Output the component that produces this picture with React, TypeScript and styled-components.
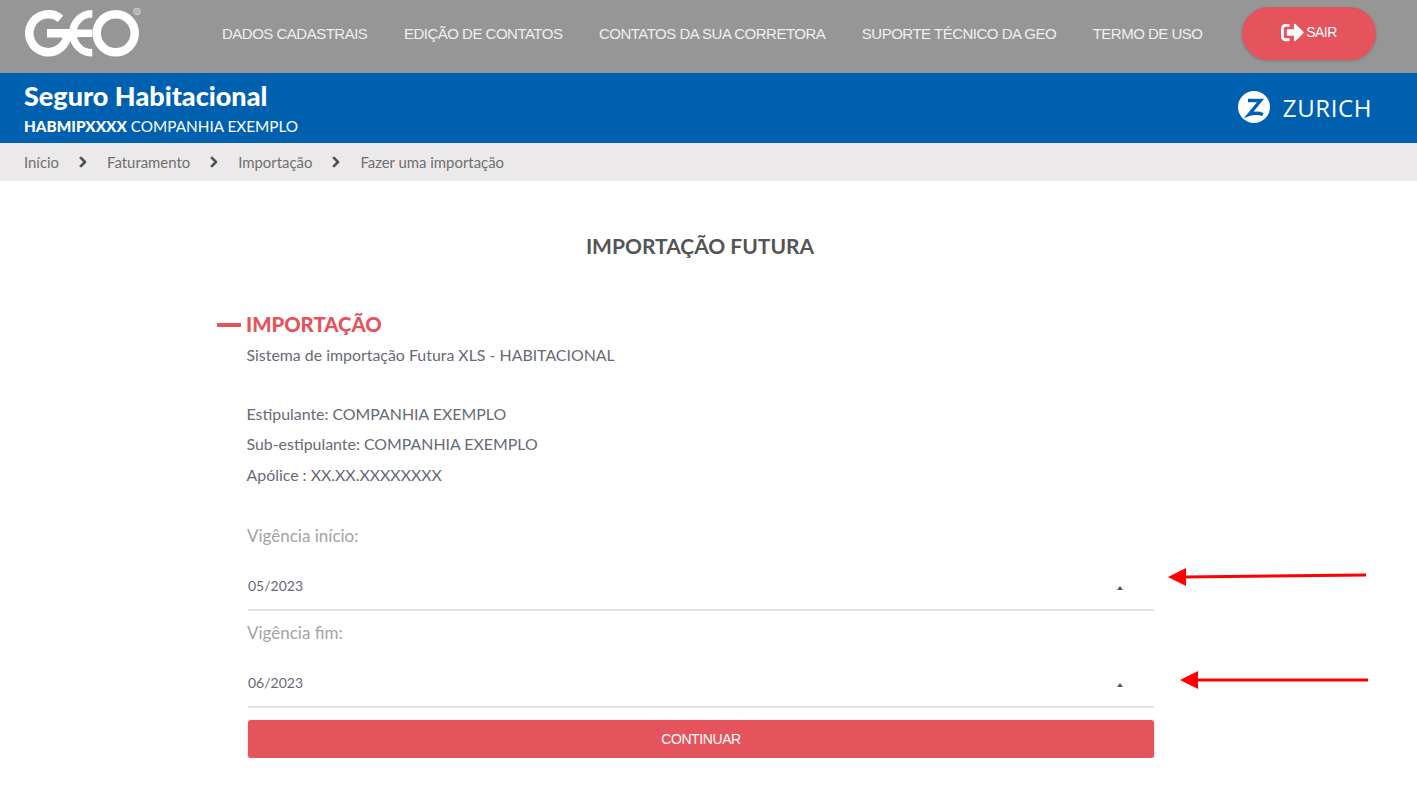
import React from 'react';
import styled, { createGlobalStyle } from 'styled-components';
import { FaSignOutAlt, FaChevronRight } from 'react-icons/fa';

const GlobalStyle = createGlobalStyle`
  html, body {
    margin: 0;
    padding: 0;
    background: #fff;
    overflow: hidden;
  }
  body {
    font-family: "Lato", "Liberation Sans", sans-serif;
  }
`;

const navItems = [
  'DADOS CADASTRAIS',
  'EDIÇÃO DE CONTATOS',
  'CONTATOS DA SUA CORRETORA',
  'SUPORTE TÉCNICO DA GEO',
  'TERMO DE USO',
];

const crumbs = ['Início', 'Faturamento', 'Importação', 'Fazer uma importação'];

const GeoLogo = () => (
  <LogoSvg viewBox="0 -3 118 52" role="img" aria-label="GEO">
    <g fill="none" stroke="#fff">
      <path d="M35.5 8.7 A19 19 0 1 0 42.3 23.3 H22" strokeWidth="8.5" />
      <path d="M67.3 3.8 A19.5 19.5 0 0 0 67.3 42.8" strokeWidth="7.5" />
      <line x1="47.8" y1="23.3" x2="67.3" y2="23.3" strokeWidth="7.5" />
      <circle cx="90.7" cy="23.3" r="19" strokeWidth="8.5" />
    </g>
    <circle cx="112" cy="1.5" r="3.4" fill="#b5b5b5" stroke="#c9c9c9" strokeWidth="1" />
  </LogoSvg>
);

const ZurichMark = () => (
  <svg width="32" height="32" viewBox="0 0 32 32">
    <circle cx="16" cy="16" r="16" fill="#fff" />
    <path d="M10 9.5 H22.5 L11 23.5 Q18 21 25 23.5" fill="none" stroke="#0060b0" strokeWidth="3.4" />
  </svg>
);

const RedArrow = ({ width, drop }: { width: number; drop: number }) => (
  <svg width={width} height="20" viewBox={`0 0 ${width} 20`}>
    <polygon points="0,10 18,1 18,19" fill="#f00" />
    <line x1="16" y1="10" x2={width} y2={10 - drop} stroke="#f00" strokeWidth="3" />
  </svg>
);

type FieldProps = {
  label: string;
  value: string;
  arrowTop: number;
  arrowLeft: number;
  arrowWidth: number;
  arrowDrop: number;
};

const SelectField = ({ label, value, arrowTop, arrowLeft, arrowWidth, arrowDrop }: FieldProps) => (
  <Field>
    <FieldLabel>{label}</FieldLabel>
    <SelectBox>
      <span>{value}</span>
      <Caret />
      <ArrowNote $top={arrowTop} $left={arrowLeft}>
        <RedArrow width={arrowWidth} drop={arrowDrop} />
      </ArrowNote>
    </SelectBox>
  </Field>
);

export default function App() {
  return (
    <>
      <GlobalStyle />
      <TopBar>
        <GeoLogo />
        <Nav>
          {navItems.map(item => (
            <NavLink key={item}>{item}</NavLink>
          ))}
        </Nav>
        <LogoutButton>
          <FaSignOutAlt size={23} />
          SAIR
        </LogoutButton>
      </TopBar>

      <ProductBar>
        <div>
          <ProductTitle>Seguro Habitacional</ProductTitle>
          <ProductSub>
            <strong>HABMIPXXXX</strong> COMPANHIA EXEMPLO
          </ProductSub>
        </div>
        <Zurich>
          <ZurichMark />
          <ZurichName>ZURICH</ZurichName>
        </Zurich>
      </ProductBar>

      <Breadcrumb>
        {crumbs.map((c, i) => (
          <React.Fragment key={c}>
            {i > 0 && (
              <CrumbSep>
                <FaChevronRight size={12} />
              </CrumbSep>
            )}
            <span>{c}</span>
          </React.Fragment>
        ))}
      </Breadcrumb>

      <Main>
        <PageTitle>IMPORTAÇÃO FUTURA</PageTitle>
        <SectionTitle>IMPORTAÇÃO</SectionTitle>
        <Intro>Sistema de importação Futura XLS - HABITACIONAL</Intro>
        <InfoBlock>
          <BodyLine>Estipulante: COMPANHIA EXEMPLO</BodyLine>
          <BodyLine>Sub-estipulante: COMPANHIA EXEMPLO</BodyLine>
          <BodyLine>Apólice : XX.XX.XXXXXXXX</BodyLine>
        </InfoBlock>
        <Form>
          <SelectField
            label="Vigência início:"
            value="05/2023"
            arrowTop={19}
            arrowLeft={14}
            arrowWidth={198}
            arrowDrop={2}
          />
          <SelectField
            label="Vigência fim:"
            value="06/2023"
            arrowTop={25}
            arrowLeft={26}
            arrowWidth={188}
            arrowDrop={0}
          />
          <ContinueButton>CONTINUAR</ContinueButton>
        </Form>
      </Main>
    </>
  );
}

const TopBar = styled.header`
  height: 73px;
  background: #969696;
  display: flex;
  align-items: center;
  padding: 0 41px 0 25px;
  box-sizing: border-box;
`;

const LogoSvg = styled.svg`
  width: 118px;
  height: 52px;
  margin-top: -7px;
  flex: none;
`;

const Nav = styled.nav`
  display: flex;
  gap: 36.5px;
  margin-left: 79px;
  margin-top: -6px;
  flex: 1;
`;

const NavLink = styled.a`
  font-family: "Liberation Sans", Arial, sans-serif;
  font-size: 15px;
  letter-spacing: -0.5px;
  color: #efefef;
  white-space: nowrap;
`;

const LogoutButton = styled.button`
  width: 134px;
  height: 53px;
  margin-top: -7px;
  padding: 0 0 2px;
  border: none;
  border-radius: 27px;
  background: #e5545c;
  color: #fff;
  font-family: "Liberation Sans", Arial, sans-serif;
  font-size: 14px;
  letter-spacing: -0.5px;
  display: flex;
  align-items: center;
  justify-content: center;
  gap: 2px;
  box-shadow: 0 1px 3px rgba(0, 0, 0, 0.2);
`;

const ProductBar = styled.div`
  height: 70px;
  background: #0060b0;
  color: #fff;
  display: flex;
  align-items: center;
  justify-content: space-between;
  padding: 0 45px 0 24px;
  box-sizing: border-box;
`;

const ProductTitle = styled.div`
  font-size: 27px;
  font-weight: 900;
  line-height: 30px;
`;

const ProductSub = styled.div`
  font-size: 15.3px;
  font-weight: 400;
  line-height: 18px;
  margin-top: 6px;
  white-space: nowrap;

  strong {
    font-weight: 900;
  }
`;

const Zurich = styled.div`
  display: flex;
  align-items: center;
  gap: 13px;
  margin-top: -2px;
`;

const ZurichName = styled.span`
  font-family: "Open Sans", sans-serif;
  font-size: 24px;
  letter-spacing: 0.6px;
`;

const Breadcrumb = styled.div`
  height: 38px;
  background: #ebe9e9;
  color: #6f6f6f;
  display: flex;
  align-items: center;
  padding-left: 24px;
  font-size: 14.9px;
`;

const CrumbSep = styled.span`
  color: #4a4a4a;
  width: 48px;
  display: flex;
  justify-content: center;

  svg {
    stroke: currentColor;
    stroke-width: 40px;
  }
`;

const Main = styled.main`
  width: 906px;
  margin-left: 248px;
`;

const PageTitle = styled.h1`
  margin: 52px 0 0;
  padding-right: 2px;
  font-size: 21px;
  line-height: 26px;
  font-weight: 700;
  color: #555;
  text-align: center;
`;

const SectionTitle = styled.h2`
  position: relative;
  margin: 52px 0 0 -2px;
  font-size: 20.3px;
  line-height: 26px;
  font-weight: 900;
  color: #e5545c;

  &::before {
    content: "";
    position: absolute;
    left: -29px;
    top: 12px;
    width: 24px;
    height: 4px;
    background: #e5545c;
  }
`;

const BodyLine = styled.p`
  margin: 0 0 0 -1.5px;
  font-size: 15.9px;
  line-height: 30.5px;
  color: #666a75;
`;

const Intro = styled(BodyLine)`
  margin-top: 3px;
`;

const InfoBlock = styled.div`
  margin-top: 28px;
`;

const Form = styled.div`
  margin-top: 34px;
`;

const Field = styled.div`
  margin-bottom: 9.5px;
`;

const FieldLabel = styled.label`
  display: block;
  margin-left: -1px;
  font-size: 17px;
  line-height: 24px;
  color: #a3a3a3;
`;

const SelectBox = styled.div`
  position: relative;
  height: 63px;
  border-bottom: 2px solid #e2e2e2;
  box-sizing: border-box;
  display: flex;
  align-items: flex-end;
  justify-content: space-between;
  padding: 0 31px 14px 0;
  font-size: 14px;
  line-height: 18px;
  color: #666a75;
`;

const Caret = styled.i`
  width: 0;
  height: 0;
  border-left: 3.5px solid transparent;
  border-right: 3.5px solid transparent;
  border-bottom: 4px solid #556;
  margin-bottom: 5px;
`;

const ArrowNote = styled.span<{ $top: number; $left: number }>`
  position: absolute;
  top: ${p => p.$top}px;
  left: calc(100% + ${p => p.$left}px);
  line-height: 0;
`;

const ContinueButton = styled.button`
  display: block;
  width: 100%;
  height: 38px;
  margin-top: 12.5px;
  border: none;
  border-radius: 3px;
  background: #e5545c;
  color: #fff;
  font-family: "Liberation Sans", Arial, sans-serif;
  font-size: 14px;
  letter-spacing: -0.4px;
  box-shadow: 0 1px 3px rgba(0, 0, 0, 0.25);
`;
